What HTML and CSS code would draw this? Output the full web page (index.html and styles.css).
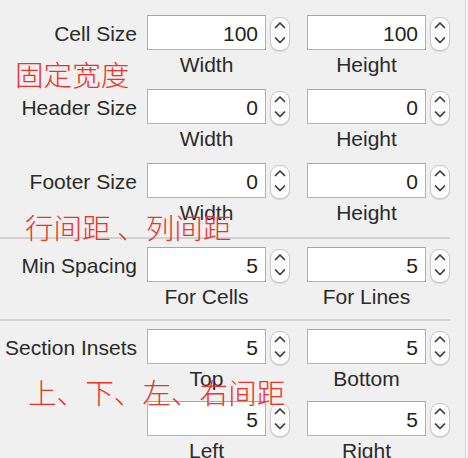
FILE: index.html
```html
<!DOCTYPE html>
<html lang="zh">
<head>
<meta charset="utf-8">
<link rel="stylesheet" href="styles.css">
</head>
<body>
<div class="panel">
  <div class="section first">
    <div class="row">
      <div class="label">Cell Size</div>
      <div class="field"><div class="ctl"><div class="input">100</div><div class="stepper"><svg viewBox="0 0 20 34" width="20" height="34"><path d="M5.5 10.5 L10 6 L14.5 10.5 M5.5 21 L10 25.5 L14.5 21"/></svg></div></div><div class="cap">Width</div></div>
      <div class="field"><div class="ctl"><div class="input">100</div><div class="stepper"><svg viewBox="0 0 20 34" width="20" height="34"><path d="M5.5 10.5 L10 6 L14.5 10.5 M5.5 21 L10 25.5 L14.5 21"/></svg></div></div><div class="cap">Height</div></div>
    </div>
    <div class="row">
      <div class="label">Header Size</div>
      <div class="field"><div class="ctl"><div class="input">0</div><div class="stepper"><svg viewBox="0 0 20 34" width="20" height="34"><path d="M5.5 10.5 L10 6 L14.5 10.5 M5.5 21 L10 25.5 L14.5 21"/></svg></div></div><div class="cap">Width</div></div>
      <div class="field"><div class="ctl"><div class="input">0</div><div class="stepper"><svg viewBox="0 0 20 34" width="20" height="34"><path d="M5.5 10.5 L10 6 L14.5 10.5 M5.5 21 L10 25.5 L14.5 21"/></svg></div></div><div class="cap">Height</div></div>
    </div>
    <div class="row">
      <div class="label">Footer Size</div>
      <div class="field"><div class="ctl"><div class="input">0</div><div class="stepper"><svg viewBox="0 0 20 34" width="20" height="34"><path d="M5.5 10.5 L10 6 L14.5 10.5 M5.5 21 L10 25.5 L14.5 21"/></svg></div></div><div class="cap">Width</div></div>
      <div class="field"><div class="ctl"><div class="input">0</div><div class="stepper"><svg viewBox="0 0 20 34" width="20" height="34"><path d="M5.5 10.5 L10 6 L14.5 10.5 M5.5 21 L10 25.5 L14.5 21"/></svg></div></div><div class="cap">Height</div></div>
    </div>
  </div>
  <div class="sep sep1"></div>
  <div class="section">
    <div class="row">
      <div class="label">Min Spacing</div>
      <div class="field"><div class="ctl"><div class="input">5</div><div class="stepper"><svg viewBox="0 0 20 34" width="20" height="34"><path d="M5.5 10.5 L10 6 L14.5 10.5 M5.5 21 L10 25.5 L14.5 21"/></svg></div></div><div class="cap">For Cells</div></div>
      <div class="field"><div class="ctl"><div class="input">5</div><div class="stepper"><svg viewBox="0 0 20 34" width="20" height="34"><path d="M5.5 10.5 L10 6 L14.5 10.5 M5.5 21 L10 25.5 L14.5 21"/></svg></div></div><div class="cap">For Lines</div></div>
    </div>
  </div>
  <div class="sep sep2"></div>
  <div class="section insets">
    <div class="row">
      <div class="label">Section Insets</div>
      <div class="field"><div class="ctl"><div class="input">5</div><div class="stepper"><svg viewBox="0 0 20 34" width="20" height="34"><path d="M5.5 10.5 L10 6 L14.5 10.5 M5.5 21 L10 25.5 L14.5 21"/></svg></div></div><div class="cap">Top</div></div>
      <div class="field"><div class="ctl"><div class="input">5</div><div class="stepper"><svg viewBox="0 0 20 34" width="20" height="34"><path d="M5.5 10.5 L10 6 L14.5 10.5 M5.5 21 L10 25.5 L14.5 21"/></svg></div></div><div class="cap">Bottom</div></div>
    </div>
    <div class="row">
      <div class="label"></div>
      <div class="field"><div class="ctl"><div class="input">5</div><div class="stepper"><svg viewBox="0 0 20 34" width="20" height="34"><path d="M5.5 10.5 L10 6 L14.5 10.5 M5.5 21 L10 25.5 L14.5 21"/></svg></div></div><div class="cap">Left</div></div>
      <div class="field"><div class="ctl"><div class="input">5</div><div class="stepper"><svg viewBox="0 0 20 34" width="20" height="34"><path d="M5.5 10.5 L10 6 L14.5 10.5 M5.5 21 L10 25.5 L14.5 21"/></svg></div></div><div class="cap">Right</div></div>
    </div>
  </div>

  <div class="note note1">固定宽度</div>
  <div class="note note2">行间距 、列间距</div>
  <div class="note note3">上、下、左、右间距</div>
</div>
</body>
</html>
```
FILE: styles.css
```css
html, body {
  margin: 0;
  padding: 0;
}
body {
  background: #f4f4f4;
  width: 468px;
  height: 458px;
  overflow: hidden;
  font-family: "Liberation Sans", Arial, sans-serif;
  font-size: 21px;
  color: #2a2a2a;
}
.panel {
  position: relative;
  width: 465px;
  height: 458px;
  background: #f0f0f0;
  border-right: 1px solid #d8d8d8;
}
.section {
  display: flex;
  flex-direction: column;
  row-gap: 12px;
}
.section.first {
  padding-top: 15px;
}
.section.insets {
  row-gap: 10px;
}
.row {
  display: flex;
  align-items: flex-start;
}
.label {
  width: 137px;
  margin-right: 10px;
  height: 35px;
  line-height: 38px;
  text-align: right;
  white-space: nowrap;
}
.field {
  width: 143px;
  display: flex;
  flex-direction: column;
}
.field + .field {
  margin-left: 17px;
}
.ctl {
  display: flex;
  align-items: center;
  column-gap: 4px;
  height: 35px;
}
.input {
  box-sizing: border-box;
  width: 119px;
  height: 35px;
  background: #ffffff;
  border: 1px solid #b2b2b2;
  border-top-color: #a6a6a6;
  text-align: right;
  padding-right: 7px;
  line-height: 35px;
  font-size: 21px;
  color: #222;
}
.stepper {
  box-sizing: border-box;
  width: 20px;
  height: 34px;
  margin-top: 2px;
  background: #fdfdfd;
  border: 1px solid #c9c9c9;
  border-radius: 9px;
  box-shadow: 0 1px 1px rgba(0, 0, 0, 0.12);
  overflow: hidden;
  position: relative;
}
.stepper svg {
  position: absolute;
  left: -1px;
  top: -1px;
  display: block;
}
.stepper path {
  fill: none;
  stroke: #3a3a3a;
  stroke-width: 1.7;
  stroke-linecap: round;
  stroke-linejoin: round;
}
.cap {
  width: 119px;
  margin-top: 3px;
  height: 24px;
  line-height: 24px;
  text-align: center;
  white-space: nowrap;
}
.sep {
  width: 450px;
  height: 2px;
  background: #d2d2d2;
}
.sep1 {
  margin: 12px 0 8px;
}
.sep2 {
  margin: 10px 0 8px;
}
.note {
  position: absolute;
  font-family: "Noto Sans CJK SC", "Noto Sans", sans-serif;
  font-size: 28.6px;
  line-height: 1;
  color: #ec3128;
  white-space: pre;
  font-weight: 300;
}
.note1 {
  left: 15px;
  top: 60px;
}
.note2 {
  left: 25px;
  top: 213px;
}
.note3 {
  left: 28px;
  top: 378px;
}
```
